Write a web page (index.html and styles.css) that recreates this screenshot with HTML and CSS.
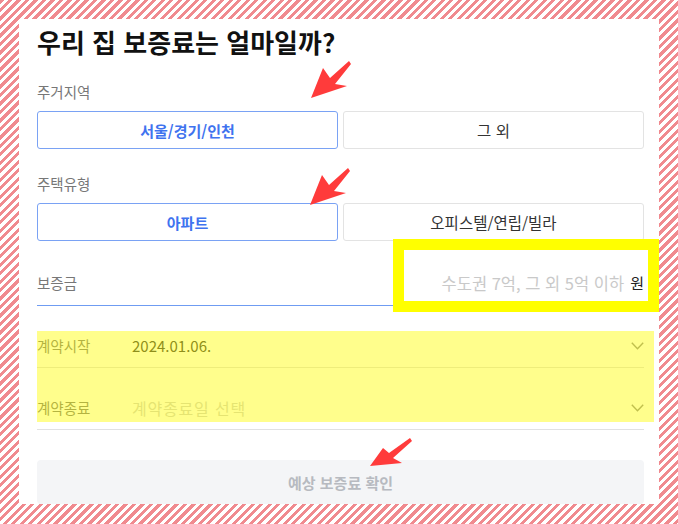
FILE: index.html
```html
<!DOCTYPE html>
<html lang="ko">
<head>
<meta charset="utf-8">
<title>우리 집 보증료는 얼마일까?</title>
<link rel="stylesheet" href="styles.css">
</head>
<body>
<div class="stage">
  <div class="frame">
    <main class="card">
      <h1 class="title">우리 집 보증료는 얼마일까?</h1>

      <section class="group">
        <div class="label">주거지역</div>
        <div class="choices">
          <button class="choice selected">서울/경기/인천</button>
          <button class="choice">그 외</button>
        </div>
      </section>

      <section class="group">
        <div class="label">주택유형</div>
        <div class="choices">
          <button class="choice selected">아파트</button>
          <button class="choice">오피스텔/연립/빌라</button>
        </div>
      </section>

      <div class="deposit">
        <span class="deposit-label">보증금</span>
        <span class="deposit-input"><span class="placeholder">수도권 7억, 그 외 5억 이하</span><span class="unit">원</span></span>
      </div>

      <div class="date-row first">
        <span class="date-label">계약시작</span>
        <span class="date-value">2024.01.06.</span>
        <svg class="chev" width="13" height="8" viewBox="0 0 13 8"><polyline points="0.8,0.8 6.5,6.8 12.2,0.8" fill="none" stroke="#8c8c8c" stroke-width="1.4"/></svg>
      </div>
      <div class="date-row">
        <span class="date-label">계약종료</span>
        <span class="date-value empty">계약종료일 선택</span>
        <svg class="chev" width="13" height="8" viewBox="0 0 13 8"><polyline points="0.8,0.8 6.5,6.8 12.2,0.8" fill="none" stroke="#8c8c8c" stroke-width="1.4"/></svg>
      </div>

      <button class="submit">예상 보증료 확인</button>
    </main>
  </div>

  <div class="mark-box"></div>
  <div class="mark-highlight"></div>

  <svg class="arrow arrow-1" width="44" height="40" viewBox="0 0 44 40"><polygon points="2,38 14,8 21,18 40,1 42,4 26,24 38,26" fill="#ff3b3b"/></svg>
  <svg class="arrow arrow-2" width="44" height="40" viewBox="0 0 44 40"><polygon points="2,38 14,8 21,18 40,1 42,4 26,24 38,26" fill="#ff3b3b"/></svg>
  <svg class="arrow arrow-3" width="46" height="34" viewBox="0 0 46 34"><polygon points="2,31 15,13 21,18 42,3 44,6 25,23 34,28" fill="#ff3b3b"/></svg>
</div>
</body>
</html>
```

FILE: styles.css
```css
* { box-sizing: border-box; }

html, body {
  margin: 0;
  padding: 0;
}

body {
  font-family: "Noto Sans CJK KR", "Noto Sans", sans-serif;
  color: #222;
}

.stage {
  position: relative;
  width: 678px;
  height: 524px;
  overflow: hidden;
  background: repeating-linear-gradient(135deg, #f08a8f 0 3px, #ffffff 3px 6px);
}

.frame {
  padding: 19px 19px 0 19px;
}

.card {
  background: #fff;
  height: 485px;
  overflow: hidden;
  padding: 8px 15px 0 18px;
  display: flex;
  flex-direction: column;
}

.title {
  margin: 0;
  font-size: 26px;
  line-height: 30px;
  font-weight: 700;
  letter-spacing: 0;
  color: #111;
}

.group {
  margin-top: 25px;
}

.label {
  font-size: 14.5px;
  line-height: 20px;
  color: #777;
}

.choices {
  margin-top: 9px;
  display: grid;
  grid-template-columns: 1fr 1fr;
  gap: 5px;
}

.choice {
  height: 38px;
  border: 1px solid #e3e3e3;
  border-radius: 3px;
  background: #fff;
  font-family: inherit;
  font-size: 15.5px;
  color: #333;
  padding: 0;
}

.choice.selected {
  border-color: #7aa2f4;
  color: #3f73ef;
  font-weight: 700;
  font-size: 15px;
}

.deposit {
  margin-top: 20px;
  height: 45px;
  border-bottom: 1px solid #6f9cf2;
  display: flex;
  align-items: center;
  justify-content: space-between;
}

.deposit-label {
  font-size: 14.5px;
  color: #777;
  line-height: 20px;
}

.deposit-input {
  display: flex;
  align-items: center;
  gap: 6px;
  font-size: 16.5px;
  line-height: 20px;
}

.placeholder {
  color: #c9c9c9;
}

.unit {
  color: #222;
  font-size: 15px;
}

.date-row {
  height: 62px;
  border-bottom: 1px solid #e1e1e1;
  display: flex;
  align-items: flex-end;
  padding-bottom: 11px;
}

.date-row.first {
  height: 63px;
}

.date-label {
  width: 95px;
  font-size: 14.5px;
  line-height: 20px;
  color: #777;
}

.date-value {
  flex: 1;
  font-size: 15px;
  line-height: 20px;
  color: #333;
}

.date-value.empty {
  font-size: 16px;
  color: #d0d0d0;
  letter-spacing: 0.8px;
}

.chev {
  margin: 0 0 6px 0;
}

.submit {
  margin-top: 30px;
  height: 44px;
  flex: none;
  width: 100%;
  border: none;
  border-radius: 4px;
  background: #f4f5f7;
  font-family: inherit;
  font-size: 15px;
  font-weight: 700;
  color: #b7bac0;
}

/* annotations */
.mark-box {
  position: absolute;
  left: 393px;
  top: 239px;
  width: 266px;
  height: 73px;
  border: 11px solid #ffff00;
}

.mark-highlight {
  position: absolute;
  left: 37px;
  top: 331px;
  width: 617px;
  height: 91px;
  background: rgba(255, 252, 0, 0.45);
}

.arrow {
  position: absolute;
}

.arrow-1 { left: 309px; top: 60px; }
.arrow-2 { left: 308px; top: 167px; }
.arrow-3 { left: 368px; top: 435px; }
```
